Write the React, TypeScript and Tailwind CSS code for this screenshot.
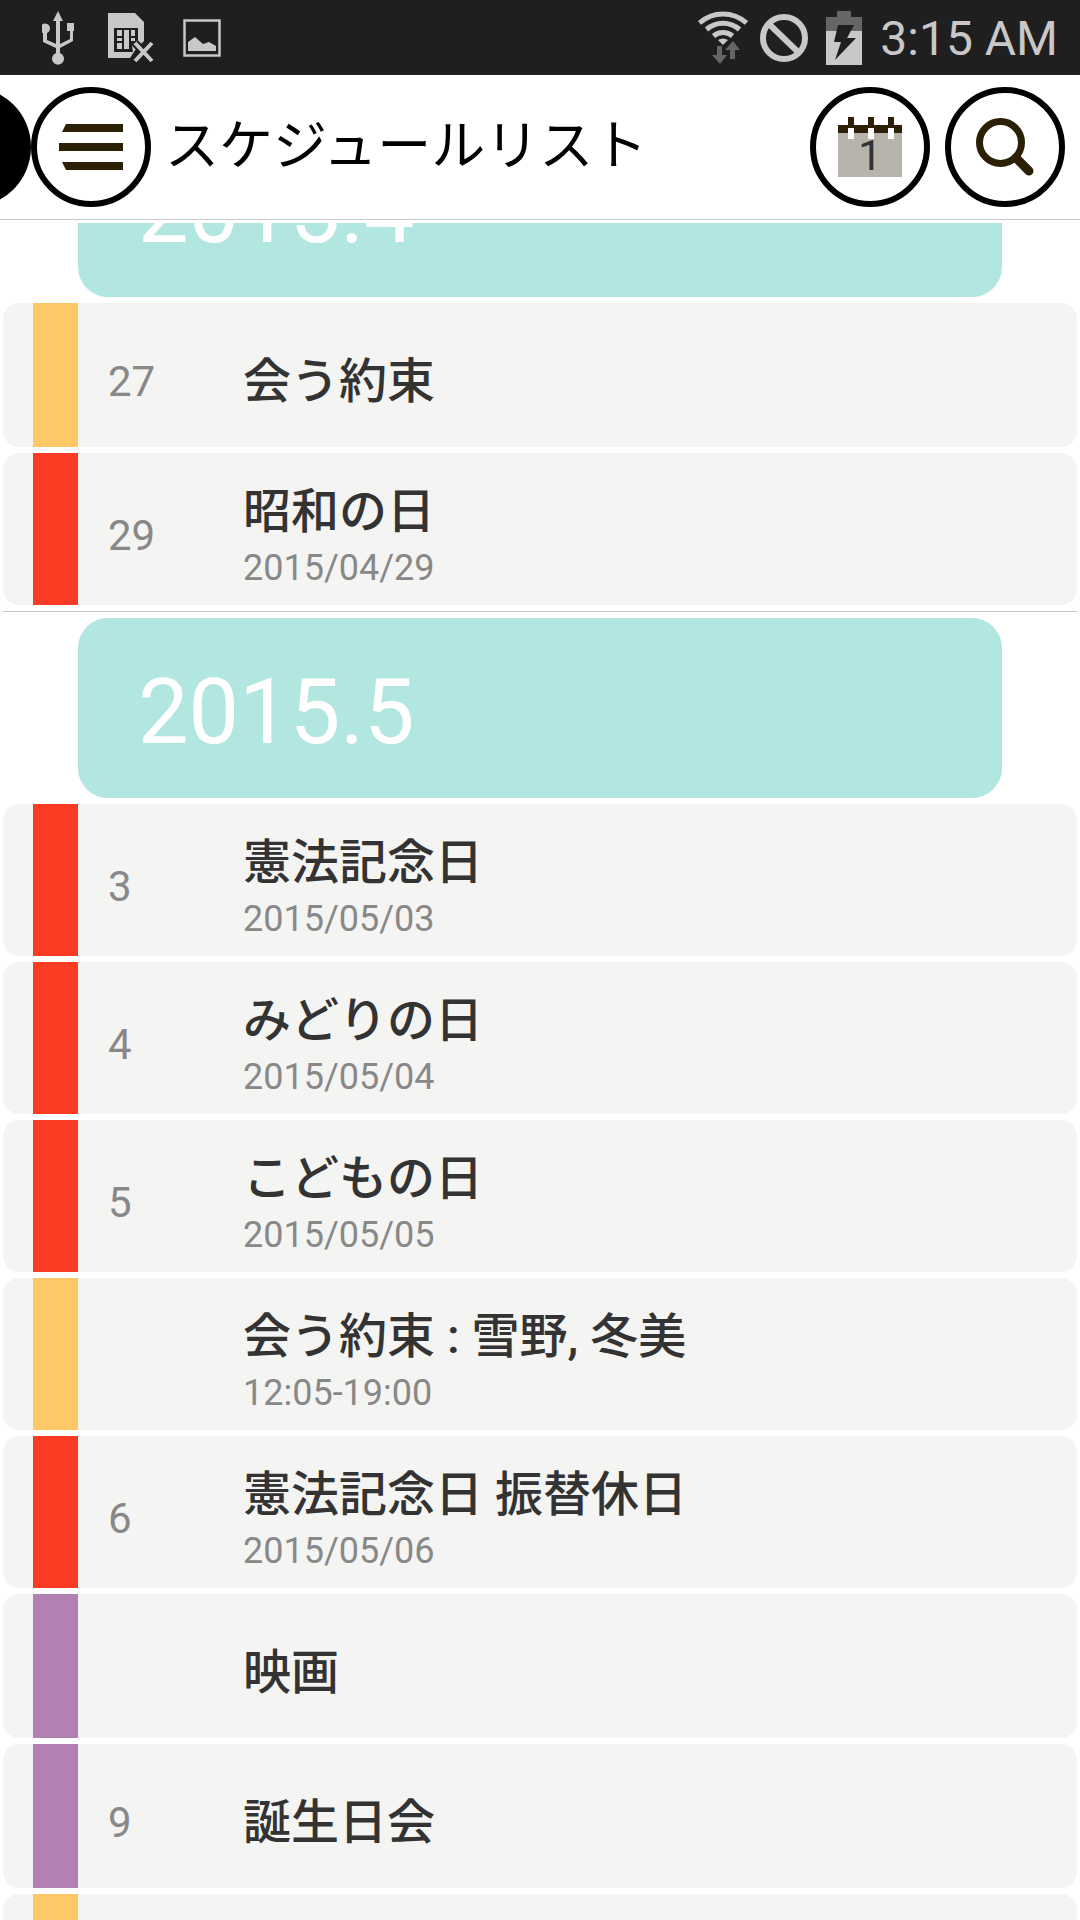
import type { ReactNode } from 'react';

type StripeColor = 'orange' | 'red' | 'purple';

interface ScheduleItem {
    id: number;
    day?: string;
    title: string;
    detail?: string;
    color: StripeColor;
}

interface ScheduleMonth {
    label: string;
    items: ScheduleItem[];
}

const stripeClasses: Record<StripeColor, string> = {
    orange: 'bg-[#ffc866]',
    red: 'bg-[#fa3c25]',
    purple: 'bg-[#b381b1]',
};

const months: ScheduleMonth[] = [
    {
        label: '2015.4',
        items: [
            { id: 1, day: '27', title: '会う約束', color: 'orange' },
            { id: 2, day: '29', title: '昭和の日', detail: '2015/04/29', color: 'red' },
        ],
    },
    {
        label: '2015.5',
        items: [
            { id: 3, day: '3', title: '憲法記念日', detail: '2015/05/03', color: 'red' },
            { id: 4, day: '4', title: 'みどりの日', detail: '2015/05/04', color: 'red' },
            { id: 5, day: '5', title: 'こどもの日', detail: '2015/05/05', color: 'red' },
            { id: 6, title: '会う約束 : 雪野, 冬美', detail: '12:05-19:00', color: 'orange' },
            { id: 7, day: '6', title: '憲法記念日 振替休日', detail: '2015/05/06', color: 'red' },
            { id: 8, title: '映画', color: 'purple' },
            { id: 9, day: '9', title: '誕生日会', color: 'purple' },
            { id: 10, title: '', color: 'orange' },
        ],
    },
];

const UsbIcon = () => (
    <svg className="h-[54px] w-8" viewBox="0 0 32 54" fill="#c8c8c8">
        <path d="M16 0l5 10h-3v23l10-5v-8h-3v-8h8v8h-2v10l-13 7v5a6 6 0 1 1-4 0v-5l-13-6v-9a5 5 0 1 1 4 0v7l9 4V10h-3z" />
    </svg>
);

const SimIcon = () => (
    <svg className="h-[50px] w-[46px]" viewBox="0 0 46 50">
        <path d="M0 0h27l9 9v19l-8 8-6 9H0z" fill="#c8c8c8" />
        <path d="M6 15h24v12l-6 6 1 6H6z" fill="#1f1f1f" />
        <path d="M9 17h5v6H9zm0 8h5v3H9zm0 5h5v6H9zm7-13h5v19h-5zm7 0h4v6h-4zm0 8h4v3h-4z" fill="#c8c8c8" />
        <path d="M27 30l17 18M44 30L27 48" stroke="#1f1f1f" strokeWidth="8" />
        <path d="M27 30l17 18M44 30L27 48" stroke="#c8c8c8" strokeWidth="4" />
    </svg>
);

const ImageIcon = () => (
    <svg className="h-[38px] w-[38px]" viewBox="0 0 38 38">
        <path d="M1.5 1.5h35v35h-35z" fill="none" stroke="#c8c8c8" strokeWidth="2.5" />
        <path d="M5 32V23l7-5 8 7 6-2 7 4v5z" fill="#c8c8c8" />
    </svg>
);

const WifiIcon = () => (
    <svg className="h-[54px] w-[50px]" viewBox="0 0 50 54">
        <g fill="none" stroke="#c8c8c8" strokeWidth="5">
            <path d="M1.5 12a35 35 0 0 1 47 0" />
            <path d="M8.5 18.5a25 25 0 0 1 33 0" />
            <path d="M15.5 25a14.5 14.5 0 0 1 19 0" />
        </g>
        <path d="M20 29q5-3 10 0l-5 5z" fill="#c8c8c8" />
        <path d="M19 35h5v9h5l-7 9-8-9h5zM32 48V39h-5l8-9 7 9h-5v9z" fill="#666" />
    </svg>
);

const SilentIcon = () => (
    <svg className="h-12 w-12" viewBox="0 0 48 48" fill="none" stroke="#c8c8c8" strokeWidth="6">
        <circle cx="24" cy="24" r="21" />
        <path d="M9 10l29 28" />
    </svg>
);

const BatteryIcon = () => (
    <svg className="h-[54px] w-9" viewBox="0 0 36 54">
        <path d="M0 6h11V0h14v6h11v15H0z" fill="#666" />
        <path d="M0 20h36v34H0z" fill="#c8c8c8" />
        <path d="M12 14h16l-7 13h9L9 49l6-18H8z" fill="#1f1f1f" />
    </svg>
);

const MenuIcon = () => (
    <svg className="h-[46px] w-16" viewBox="0 0 64 46" fill="#2b2005">
        <path d="M7 0h57v8H3zM0 19h64v8H0zM3 38h61v8H7z" />
    </svg>
);

const CalendarIcon = () => (
    <svg className="h-[60px] w-16" viewBox="0 0 64 60">
        <path d="M0 15h64v45H0z" fill="#b7b4ab" />
        <path d="M0 8h64v8H0zM10 0h6v9h-6zM30 0h6v9h-6zM50 0h6v9h-6z" fill="#2b2005" />
        <path d="M10 11h6v11h-6zM30 11h6v11h-6zM50 11h6v11h-6z" fill="#fff" />
    </svg>
);

const SearchIcon = () => (
    <svg className="h-[58px] w-[58px]" viewBox="0 0 58 58" fill="none" stroke="#2b2005">
        <circle cx="24.5" cy="24.5" r="21" strokeWidth="7" />
        <path d="M40 40l13 13" strokeWidth="9" strokeLinecap="round" />
    </svg>
);

const CircleButton = ({ label, children }: { label: string; children: ReactNode }) => (
    <button
        type="button"
        aria-label={label}
        className="relative flex size-[120px] shrink-0 items-center justify-center rounded-full border-6 border-black bg-white"
    >
        {children}
    </button>
);

const StatusBar = () => (
    <div className="flex h-[75px] shrink-0 items-center justify-between bg-[#1f1f1f] pr-[22px] pl-[42px]">
        <div className="flex items-center">
            <UsbIcon />
            <div className="ml-[34px] flex items-center gap-[29px]">
                <SimIcon />
                <ImageIcon />
            </div>
        </div>
        <div className="flex items-center">
            <WifiIcon />
            <div className="ml-3 flex items-center gap-[18px]">
                <SilentIcon />
                <BatteryIcon />
                <span className="pt-[2px] text-[48px] leading-[60px] text-[#c8c8c8]">3:15 AM</span>
            </div>
        </div>
    </div>
);

const Header = () => (
    <header className="flex h-[145px] shrink-0 items-center overflow-hidden border-b border-[#c8c8c8] pr-[15px]">
        <div className="-ml-[89px] size-[120px] shrink-0 rounded-full bg-black" />
        <CircleButton label="メニュー">
            <MenuIcon />
        </CircleButton>
        <h1 className="ml-[14px] flex-1 text-[54px] leading-[64px] whitespace-nowrap text-black">スケジュールリスト</h1>
        <div className="flex gap-[15px]">
            <CircleButton label="カレンダー">
                <CalendarIcon />
                <span className="absolute inset-x-0 top-[39px] text-center text-[42px] leading-[48px] text-[#333]">1</span>
            </CircleButton>
            <CircleButton label="検索">
                <SearchIcon />
            </CircleButton>
        </div>
    </header>
);

const ScheduleRow = ({ item }: { item: ScheduleItem }) => (
    <li className={`flex shrink-0 overflow-hidden rounded-2xl bg-[#f4f4f2] pl-[30px] ${item.detail ? 'h-[152px]' : 'h-36'}`}>
        <div className={`w-[45px] shrink-0 ${stripeClasses[item.color]}`} />
        <div className="flex flex-1 items-center pt-[14px] pl-[30px]">
            <span className="w-[135px] shrink-0 text-[42px] leading-[48px] text-[#888]">{item.day}</span>
            <div className="flex flex-col">
                <span className="text-[48px] leading-[64px] font-medium text-[#333]">{item.title}</span>
                {item.detail && <span className="text-[36px] leading-[48px] text-[#888]">{item.detail}</span>}
            </div>
        </div>
    </li>
);

const MonthSection = ({ month }: { month: ScheduleMonth }) => (
    <section className="flex flex-col gap-[6px]">
        <h2 className="mx-[75px] flex h-[180px] items-center rounded-[30px] bg-[#b2e7e1] px-[60px] pt-[10px] text-[90px] leading-[108px] text-white">
            {month.label}
        </h2>
        <ul className="flex flex-col gap-[6px]">
            {month.items.map(item => <ScheduleRow key={item.id} item={item} />)}
        </ul>
    </section>
);

const App = () => (
    <div className="flex h-screen flex-col overflow-hidden bg-white font-[Roboto,'Noto_Sans_CJK_JP',sans-serif]">
        <StatusBar />
        <Header />
        <main className="mt-[3px] flex-1 overflow-hidden px-[3px]">
            {/* the list is scrolled part way through the first month */}
            <div className="-mt-[106px] flex flex-col gap-[6px]">
                {months.map((month, i) => (
                    <div key={month.label} className="flex flex-col gap-[6px]">
                        {i > 0 && <hr className="border-[#c8c8c8]" />}
                        <MonthSection month={month} />
                    </div>
                ))}
            </div>
        </main>
    </div>
);

export default App;
